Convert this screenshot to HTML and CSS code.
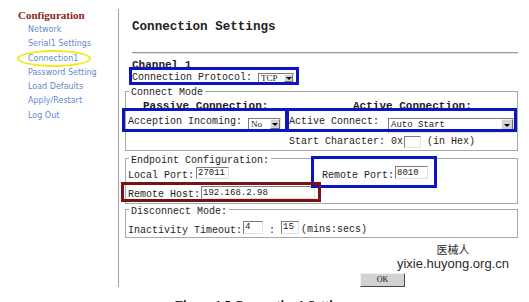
FILE: index.html
```html
<!DOCTYPE html>
<html lang="en">
<head>
<meta charset="utf-8">
<title>Connection Settings</title>
<link rel="stylesheet" href="styles.css">
</head>
<body>
<div class="canvas">
  <div class="page">
    <nav class="sidebar">
      <div class="side-title">Configuration</div>
      <a class="side-link">Network</a>
      <a class="side-link">Serial1 Settings</a>
      <a class="side-link">Connection1</a>
      <a class="side-link">Password Setting</a>
      <a class="side-link">Load Defaults</a>
      <a class="side-link">Apply/Restart</a>
      <a class="side-link">Log Out</a>
    </nav>
    <main class="main">
      <h1 class="title">Connection Settings</h1>
      <hr class="rule">
      <div class="channel">Channel 1</div>
      <div class="proto-row">Connection Protocol: <span class="select sel-tcp"><span class="sel-text serif">TCP</span><span class="sel-btn"><span class="tri"></span></span></span></div>

      <fieldset class="group group-connect">
        <legend>Connect Mode</legend>
        <div class="mode-grid">
          <div class="mode-head head-passive">Passive Connection:</div>
          <div class="mode-head head-active">Active Connection:</div>
          <div class="mode-line">Acception Incoming: <span class="select sel-no"><span class="sel-text serif">No</span><span class="sel-btn"><span class="tri"></span></span></span></div>
          <div class="mode-line">Active Connect: <span class="select sel-auto"><span class="sel-text">Auto Start</span><span class="sel-btn"><span class="tri"></span></span></span></div>
          <div class="mode-line mode-last"></div>
          <div class="mode-line mode-last">Start Character: 0x<input class="field f-hex" type="text" value=""> (in Hex)</div>
        </div>
      </fieldset>

      <fieldset class="group group-endpoint">
        <legend>Endpoint Configuration:</legend>
        <div class="ep-grid">
          <div class="ep-line ep-first">Local Port:<input class="field f-port f-local" type="text" value="27011"></div>
          <div class="ep-line ep-first">Remote Port:<input class="field f-port" type="text" value="8010"></div>
          <div class="ep-line ep-last">Remote Host:<input class="field f-host" type="text" value="192.168.2.98"></div>
        </div>
      </fieldset>

      <fieldset class="group group-disconnect">
        <legend>Disconnect Mode:</legend>
        <div class="dc-line">Inactivity Timeout:<input class="field f-min" type="text" value="4"> : <input class="field f-sec" type="text" value="15"><span class="dc-unit">(mins:secs)</span></div>
      </fieldset>

      <div class="watermark">
        <div class="wm-cn">医械人</div>
        <div class="wm-url">yixie.huyong.org.cn</div>
      </div>
      <button class="ok-btn" type="button">OK</button>
    </main>
  </div>
  <div class="caption">Figure 1.5 Connection1 Settings</div>

  <div class="ann ann-blue ann-proto"></div>
  <div class="ann ann-blue ann-accept"></div>
  <div class="ann ann-blue ann-active"></div>
  <div class="ann ann-blue ann-rport"></div>
  <div class="ann ann-red ann-rhost"></div>
  <div class="ann-ellipse"></div>
</div>
</body>
</html>
```

FILE: styles.css
```css
html, body {
  margin: 0;
  padding: 0;
  background: #ffffff;
}

.canvas {
  position: relative;
  width: 529px;
  height: 302px;
  overflow: hidden;
}

.page {
  display: flex;
  align-items: stretch;
}

/* ---------- sidebar ---------- */
.sidebar {
  flex: none;
  width: 119px;
  box-sizing: border-box;
  margin-top: 9px;
  padding-left: 18px;
  border-right: 1px solid #a4a4a4;
  display: flex;
  flex-direction: column;
}

.side-title {
  font-family: "Liberation Serif", serif;
  font-weight: bold;
  font-size: 11px;
  line-height: 13px;
  color: #8c2424;
  margin-bottom: 1px;
}

.side-link {
  font-family: "DejaVu Sans", sans-serif;
  font-size: 8px;
  line-height: 14.3px;
  color: #5f8bcc;
  padding-left: 10px;
  text-decoration: none;
}

/* ---------- main column ---------- */
.main {
  flex: 1;
  min-width: 0;
  font-family: "Liberation Mono", monospace;
  font-size: 10px;
  color: #1e1e1e;
}

.title {
  margin: 19px 0 0 13px;
  font-family: "Liberation Mono", monospace;
  font-size: 12.6px;
  line-height: 16px;
  font-weight: bold;
  color: #222;
}

.rule {
  margin: 17px 11px 0 13px;
  height: 0;
  border: 0;
  border-top: 1px solid #9a9a9a;
  border-bottom: 1px solid #e2e2e2;
}

.channel {
  margin: 5px 0 0 13px;
  font-weight: bold;
  font-size: 11px;
  line-height: 12px;
}

.proto-row {
  margin-left: 13px;
  line-height: 14px;
  white-space: nowrap;
}

/* ---------- fake selects ---------- */
.select {
  display: inline-flex;
  align-items: stretch;
  box-sizing: border-box;
  overflow: hidden;
  border: 1px solid;
  border-color: #7c7c7c #e6e6e6 #e6e6e6 #7c7c7c;
  background: #fff;
  line-height: normal;
}

.sel-text {
  flex: 1;
  display: flex;
  align-items: center;
  padding-left: 2px;
  font-family: "Liberation Mono", monospace;
  font-size: 9px;
  color: #222;
}

.sel-text.serif {
  font-family: "Liberation Serif", serif;
  font-size: 9px;
}

.sel-btn {
  flex: none;
  display: flex;
  align-items: center;
  justify-content: center;
  box-sizing: border-box;
  background: #d6d3ce;
  border: 1px solid;
  border-color: #f4f4f4 #707070 #707070 #f4f4f4;
}

.tri {
  width: 0;
  height: 0;
  border-left: 3px solid transparent;
  border-right: 3px solid transparent;
  border-top: 3px solid #000;
}

.sel-tcp {
  width: 36px;
  height: 10px;
  vertical-align: -1px;
}
.sel-tcp .sel-btn { width: 9px; }

.sel-no {
  width: 33px;
  height: 12px;
  vertical-align: -3px;
}
.sel-no .sel-btn { width: 10px; }

.sel-auto {
  width: 126px;
  height: 15px;
  margin-left: 3px;
  vertical-align: -3px;
}
.sel-auto .sel-btn { width: 12px; }

/* ---------- inputs ---------- */
.field {
  box-sizing: border-box;
  height: 13px;
  margin: 0 0 0 1px;
  padding: 0 1px;
  border: 1px solid;
  border-color: #7c7c7c #e2e2e2 #e2e2e2 #7c7c7c;
  font-family: "Liberation Mono", monospace;
  font-size: 9px;
  color: #222;
  background: #fff;
  vertical-align: 3px;
  outline: none;
}

.f-hex { width: 17px; height: 12px; vertical-align: 0; }
.f-port { width: 33px; }
.f-local { margin-left: 2px; height: 12px; }
.f-host { width: 114px; vertical-align: 2px; }
.f-min { width: 20px; }
.f-sec { width: 18px; margin-left: 0; }

/* ---------- fieldsets ---------- */
.group {
  margin: 0 11px 0 6px;
  padding: 0 2px;
  border: 1px solid #a8a8a8;
  min-width: 0;
}

.group legend {
  margin-left: 1px;
  padding: 3px 2px 0 2px;
  font-size: 10px;
  line-height: 11px;
  color: #1e1e1e;
}

.group-connect { margin-top: -1px; }
.group-endpoint { margin-top: 1px; }
.group-disconnect { margin-top: -1px; }

.mode-grid {
  display: grid;
  grid-template-columns: 161px 1fr;
}

.mode-head {
  margin-top: 2px;
  font-weight: bold;
  font-size: 11px;
  line-height: 13px;
  white-space: nowrap;
}
.head-passive { padding-left: 15px; }
.head-active { padding-left: 64px; }

.mode-line {
  line-height: 18px;
  white-space: nowrap;
}
.mode-last { line-height: 17px; }

.ep-grid {
  display: grid;
  grid-template-columns: 194px 1fr;
}
.ep-line { white-space: nowrap; }
.ep-first { line-height: 20px; }
.ep-last { line-height: 17px; grid-column: 1 / span 2; }

.dc-line {
  padding-top: 4px;
  line-height: 14px;
  white-space: nowrap;
}
.dc-unit { margin-left: 2px; }

/* ---------- watermark & button ---------- */
.watermark {
  margin: 3px 0 0 274px;
  width: 120px;
  text-align: center;
  color: #2a2a2a;
}
.wm-cn {
  font-family: "Noto Sans CJK SC", sans-serif;
  font-size: 11px;
  line-height: 16px;
}
.wm-url {
  font-family: "Liberation Sans", sans-serif;
  font-size: 13px;
  line-height: 14px;
}

.ok-btn {
  display: block;
  margin: 2px 0 0 241px;
  width: 45px;
  height: 14px;
  padding: 0;
  box-sizing: border-box;
  background: #d2d2d2;
  border: 1px solid;
  border-color: #f2f2f2 #4a4a4a #4a4a4a #f2f2f2;
  font-family: "Liberation Serif", serif;
  font-size: 8px;
  line-height: 12px;
  color: #111;
}

/* ---------- caption ---------- */
.caption {
  margin-top: 10px;
  padding-left: 175px;
  font-family: "Liberation Serif", serif;
  font-weight: bold;
  font-size: 13px;
  line-height: 16px;
  color: #111;
}

/* ---------- annotation overlays ---------- */
.ann {
  position: absolute;
  box-sizing: border-box;
  border: 3px solid;
  pointer-events: none;
}
.ann-blue { border-color: #0c14c4; }
.ann-red { border-color: #7a1212; }

.ann-proto { left: 129px; top: 67px; width: 170px; height: 18px; }
.ann-accept { left: 122px; top: 108px; width: 166px; height: 24px; }
.ann-active { left: 286px; top: 108px; width: 231px; height: 24px; }
.ann-rport { left: 311px; top: 156px; width: 126px; height: 32px; }
.ann-rhost { left: 121px; top: 182px; width: 200px; height: 20px; }

.ann-ellipse {
  position: absolute;
  left: 17px;
  top: 50px;
  width: 74px;
  height: 17px;
  box-sizing: border-box;
  border: 2px solid #f0ea1c;
  border-radius: 50%;
  pointer-events: none;
}
```
